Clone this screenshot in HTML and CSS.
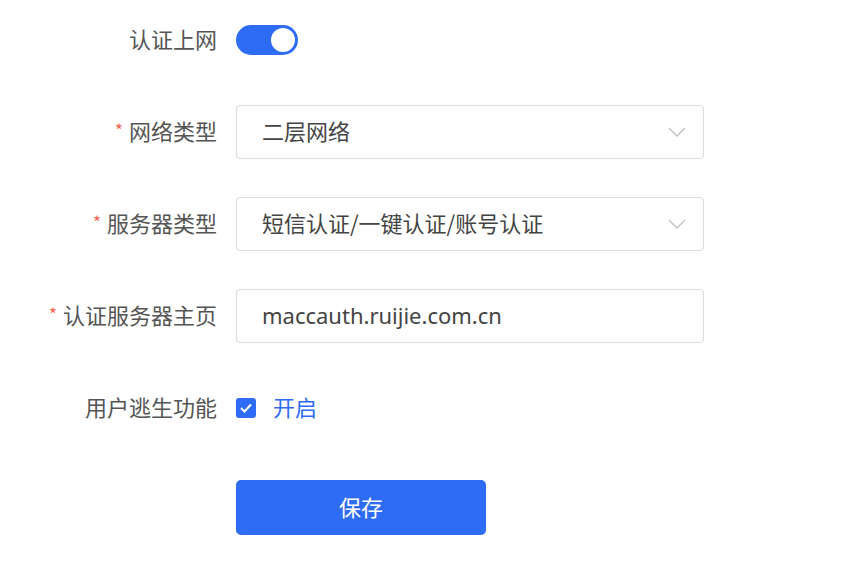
FILE: index.html
```html
<!DOCTYPE html>
<html lang="zh-CN">
<head>
  <meta charset="UTF-8" />
  <meta name="viewport" content="width=device-width, initial-scale=1.0"/>
  <title>认证设置</title>
  <link rel="stylesheet" href="styles.css">
</head>
<body>
  <form class="auth-form">
    <div class="row">
      <label class="label">认证上网</label>
      <div class="field">
        <span class="switch on"><span class="knob"></span></span>
      </div>
    </div>

    <div class="row">
      <label class="label"><span class="req">*</span>网络类型</label>
      <div class="field">
        <div class="select">
          <span class="value">二层网络</span>
          <svg class="arrow" width="18" height="10" viewBox="0 0 18 10"><path d="M1 1 L9 9 L17 1" fill="none" stroke="#bfbfbf" stroke-width="1.3"/></svg>
        </div>
      </div>
    </div>

    <div class="row">
      <label class="label"><span class="req">*</span>服务器类型</label>
      <div class="field">
        <div class="select">
          <span class="value">短信认证/一键认证/账号认证</span>
          <svg class="arrow" width="18" height="10" viewBox="0 0 18 10"><path d="M1 1 L9 9 L17 1" fill="none" stroke="#bfbfbf" stroke-width="1.3"/></svg>
        </div>
      </div>
    </div>

    <div class="row">
      <label class="label"><span class="req">*</span>认证服务器主页</label>
      <div class="field">
        <input class="input" type="text" value="maccauth.ruijie.com.cn" />
      </div>
    </div>

    <div class="row">
      <label class="label">用户逃生功能</label>
      <div class="field">
        <span class="check">
          <svg width="14" height="12" viewBox="0 0 14 12"><path d="M2 6 L5.5 9.5 L12 2.5" fill="none" stroke="#fff" stroke-width="2"/></svg>
        </span>
        <span class="check-text">开启</span>
      </div>
    </div>

    <div class="actions">
      <button type="button" class="save-btn">保存</button>
    </div>
  </form>
</body>
</html>
```

FILE: styles.css
```css
body {
  margin: 0;
  background: #fff;
  font-family: "Noto Sans CJK SC", "Noto Sans", sans-serif;
  color: #333;
}

.auth-form {
  padding-top: 13px;
}

.row {
  display: grid;
  grid-template-columns: 217px 468px;
  column-gap: 19px;
  align-items: center;
  height: 54px;
  margin-bottom: 38px;
}

.label {
  text-align: right;
  font-size: 22px;
  color: #555;
  padding-bottom: 4px;
}

.req {
  color: #f5624f;
  font-size: 17px;
  margin-right: 6px;
  vertical-align: 3px;
}

.field {
  display: flex;
  align-items: center;
}

.switch {
  display: inline-flex;
  align-items: center;
  width: 62px;
  height: 30px;
  border-radius: 15px;
  background: #2f6cf6;
  box-sizing: border-box;
  padding: 3px;
  justify-content: flex-end;
}

.knob {
  width: 24px;
  height: 24px;
  border-radius: 50%;
  background: #fff;
}

.select, .input {
  width: 468px;
  height: 54px;
  box-sizing: border-box;
  border: 1px solid #dcdcdc;
  border-radius: 4px;
  padding: 0 17px 0 25px;
  font-size: 22px;
  color: #444;
  background: #fff;
}

.select {
  display: flex;
  align-items: center;
  justify-content: space-between;
}

.value {
  padding-bottom: 4px;
}

.input {
  font-family: "Noto Sans", sans-serif;
  padding-bottom: 3px;
  outline: none;
}

.check {
  width: 20px;
  height: 20px;
  border-radius: 3px;
  background: #2f6cf6;
  display: inline-flex;
  align-items: center;
  justify-content: center;
}

.check-text {
  margin-left: 17px;
  font-size: 22px;
  color: #2f6cf6;
  padding-bottom: 4px;
}

.actions {
  padding-left: 236px;
  padding-top: 7px;
}

.save-btn {
  width: 250px;
  height: 55px;
  border: none;
  border-radius: 5px;
  background: #2f6cf6;
  color: #fff;
  font-size: 22px;
  font-family: "Noto Sans CJK SC", sans-serif;
  padding-bottom: 5px;
  cursor: pointer;
}
```
